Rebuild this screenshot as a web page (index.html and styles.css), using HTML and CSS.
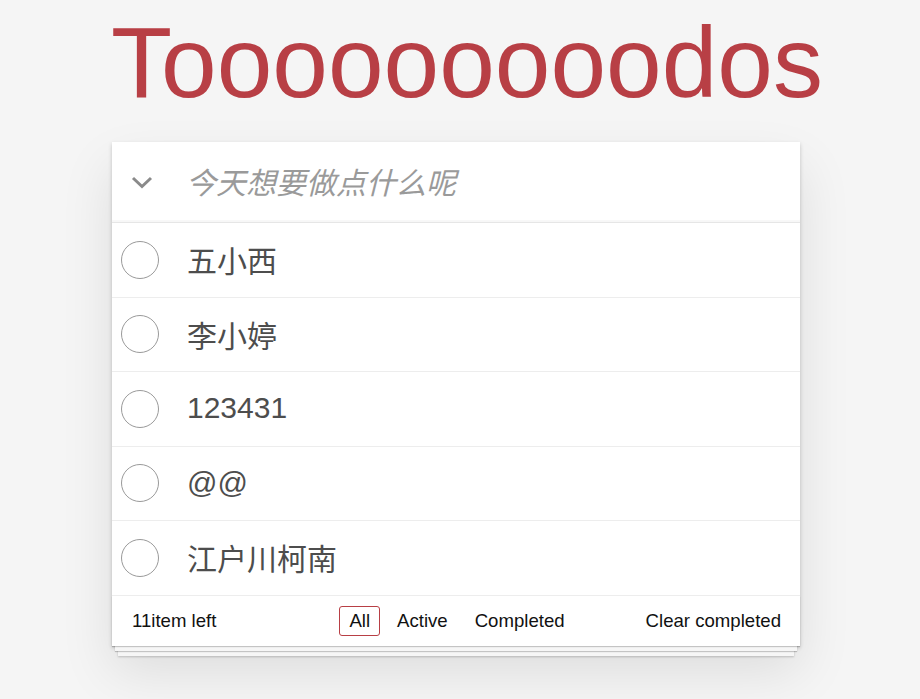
FILE: index.html
```html
<!DOCTYPE html>
<html lang="zh">
<head>
<meta charset="utf-8">
<title>Todos</title>
<link rel="stylesheet" href="styles.css">
</head>
<body>
<h1 class="title">Tooooooooodos</h1>
<section class="card">
  <header class="entry">
    <span class="toggle-all">
      <svg width="22" height="13" viewBox="0 0 22 13"><path d="M2 2 L11 10.5 L20 2" fill="none" stroke="#8a8a8a" stroke-width="3"/></svg>
    </span>
    <span class="placeholder">今天想要做点什么呢</span>
  </header>
  <ul class="list">
    <li class="item"><span class="check"></span><span class="label">五小西</span></li>
    <li class="item"><span class="check"></span><span class="label">李小婷</span></li>
    <li class="item"><span class="check"></span><span class="label">123431</span></li>
    <li class="item"><span class="check"></span><span class="label">@@</span></li>
    <li class="item"><span class="check"></span><span class="label">江户川柯南</span></li>
  </ul>
  <footer class="footer">
    <span class="count">11item left</span>
    <ul class="filters">
      <li><a class="filter selected">All</a></li>
      <li><a class="filter">Active</a></li>
      <li><a class="filter">Completed</a></li>
    </ul>
    <span class="clear">Clear completed</span>
  </footer>
</section>
</body>
</html>
```
FILE: styles.css
```css
html, body {
  margin: 0;
  padding: 0;
}
html {
  background: #f5f5f5;
}
body {
  min-height: 100vh;
  box-sizing: border-box;
  padding-top: 1px;
  font-family: "Liberation Sans", Arial, "Noto Sans CJK SC", sans-serif;
  color: #111;
}
.title {
  margin: 5px 0 24px 14px;
  text-align: center;
  font-size: 100px;
  line-height: 112px;
  font-weight: 400;
  color: #b83f45;
}
.card {
  width: 688px;
  margin: 0 0 0 112px;
  background: #fff;
  box-shadow: 0 2px 4px rgba(0,0,0,0.2), 0 25px 50px rgba(0,0,0,0.1);
}
.entry {
  height: 80px;
  display: flex;
  align-items: center;
  border-bottom: 1px solid #e6e6e6;
  box-shadow: inset 0 -2px 1px rgba(0,0,0,0.03);
}
.toggle-all {
  width: 58px;
  display: flex;
  justify-content: center;
  padding-left: 1px;
  margin-right: 18px;
  box-sizing: border-box;
}
.toggle-all svg { display: block; }
.placeholder {
  font-size: 30px;
  font-style: italic;
  color: #9a9a9a;
  margin-left: -2px;
  margin-top: -2px;
}
.list {
  list-style: none;
  margin: 0;
  padding: 0;
}
.item {
  height: 74.5px;
  box-sizing: border-box;
  display: flex;
  align-items: center;
  border-bottom: 1px solid #ededed;
  padding-left: 9px;
  padding-bottom: 1px;
}
.check {
  width: 38px;
  height: 38px;
  box-sizing: border-box;
  border: 1px solid #9a9a9a;
  border-radius: 50%;
  flex: none;
  margin-top: 1px;
}
.label {
  margin-left: 28px;
  font-size: 30px;
  color: #4d4d4d;
}
.footer {
  height: 50px;
  box-sizing: border-box;
  display: grid;
  grid-template-columns: 1fr auto 1fr;
  align-items: center;
  padding: 0 19px 0 20px;
  font-size: 18.6px;
  box-shadow: 0 1px 1px rgba(0,0,0,0.2),
    0 8px 0 -3px #f6f6f6,
    0 9px 1px -3px rgba(0,0,0,0.2),
    0 16px 0 -6px #f6f6f6,
    0 17px 2px -6px rgba(0,0,0,0.2);
}
.count { justify-self: start; }
.clear { justify-self: end; }
.filters {
  list-style: none;
  margin: 0 0 0 1px;
  padding: 0;
  display: flex;
  gap: 7px;
}
.filter {
  display: block;
  padding: 4px 9px;
  line-height: 20px;
  border: 1px solid transparent;
  border-radius: 3px;
  color: #111;
}
.filter.selected {
  border-color: #b83f45;
}
```
